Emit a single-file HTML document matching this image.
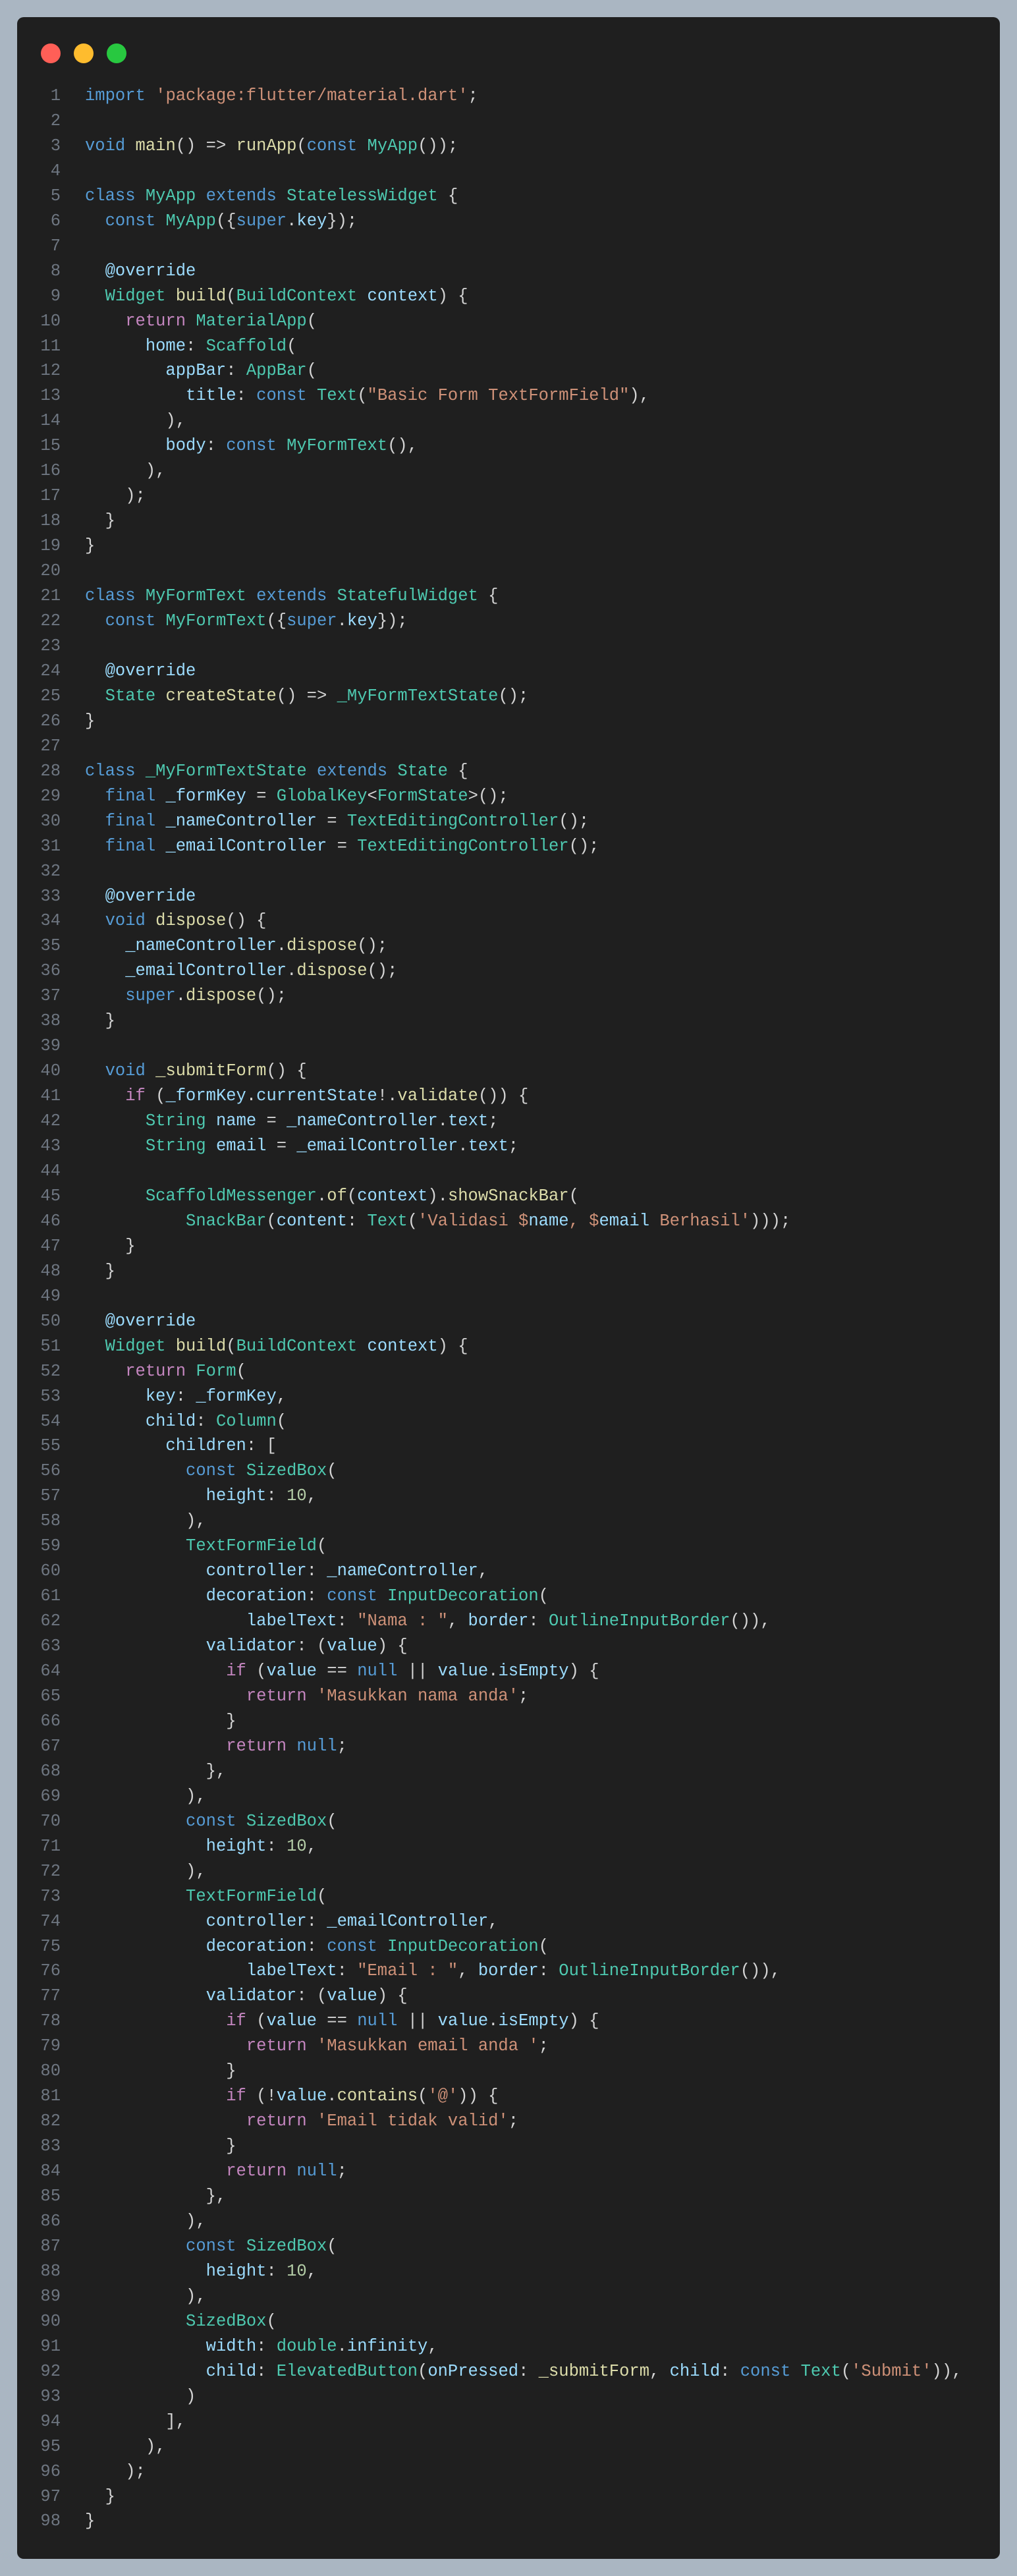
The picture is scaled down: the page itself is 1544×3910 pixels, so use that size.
<!DOCTYPE html>
<html><head><meta charset="utf-8">
<style>
html,body{margin:0;padding:0;}
body{width:1544px;height:3910px;background:#aab6c2;position:relative;overflow:hidden;}
.card{position:absolute;left:26px;top:26px;width:1492px;height:3858px;background:#1f1f1f;border-radius:10px;}
.dot{position:absolute;top:66px;width:30px;height:30px;border-radius:50%;}
pre{position:absolute;left:0;top:127px;margin:0;font-family:"Liberation Mono",monospace;font-size:25.5px;line-height:37.96px;color:#d4d4d4;white-space:pre;}
.ln{position:absolute;left:36px;top:127px;width:56px;text-align:right;font-family:"Liberation Mono",monospace;font-size:25.5px;line-height:37.96px;color:#6e7681;white-space:pre;margin:0;}
.code{left:129px;}
.k{color:#569cd6}.c{color:#c586c0}.t{color:#4ec9b0}.f{color:#dcdcaa}.s{color:#ce9178}.v{color:#9cdcfe}.n{color:#b5cea8}
</style></head><body>
<div class="dot" style="left:62px;background:#ff5f57"></div>
<div class="dot" style="left:112px;background:#febc2e"></div>
<div class="dot" style="left:162px;background:#28c840"></div>
<div class="card" style="z-index:-1"></div>
<pre class="ln">1
2
3
4
5
6
7
8
9
10
11
12
13
14
15
16
17
18
19
20
21
22
23
24
25
26
27
28
29
30
31
32
33
34
35
36
37
38
39
40
41
42
43
44
45
46
47
48
49
50
51
52
53
54
55
56
57
58
59
60
61
62
63
64
65
66
67
68
69
70
71
72
73
74
75
76
77
78
79
80
81
82
83
84
85
86
87
88
89
90
91
92
93
94
95
96
97
98</pre>
<pre class="code"><span class="k">import</span> <span class="s">'package:flutter/material.dart'</span>;

<span class="k">void</span> <span class="f">main</span>() =&gt; <span class="f">runApp</span>(<span class="k">const</span> <span class="t">MyApp</span>());

<span class="k">class</span> <span class="t">MyApp</span> <span class="k">extends</span> <span class="t">StatelessWidget</span> {
  <span class="k">const</span> <span class="t">MyApp</span>({<span class="k">super</span>.<span class="v">key</span>});

  <span class="v">@override</span>
  <span class="t">Widget</span> <span class="f">build</span>(<span class="t">BuildContext</span> <span class="v">context</span>) {
    <span class="c">return</span> <span class="t">MaterialApp</span>(
      <span class="v">home</span>: <span class="t">Scaffold</span>(
        <span class="v">appBar</span>: <span class="t">AppBar</span>(
          <span class="v">title</span>: <span class="k">const</span> <span class="t">Text</span>(<span class="s">"Basic Form TextFormField"</span>),
        ),
        <span class="v">body</span>: <span class="k">const</span> <span class="t">MyFormText</span>(),
      ),
    );
  }
}

<span class="k">class</span> <span class="t">MyFormText</span> <span class="k">extends</span> <span class="t">StatefulWidget</span> {
  <span class="k">const</span> <span class="t">MyFormText</span>({<span class="k">super</span>.<span class="v">key</span>});

  <span class="v">@override</span>
  <span class="t">State</span> <span class="f">createState</span>() =&gt; <span class="t">_MyFormTextState</span>();
}

<span class="k">class</span> <span class="t">_MyFormTextState</span> <span class="k">extends</span> <span class="t">State</span> {
  <span class="k">final</span> <span class="v">_formKey</span> = <span class="t">GlobalKey</span>&lt;<span class="t">FormState</span>&gt;();
  <span class="k">final</span> <span class="v">_nameController</span> = <span class="t">TextEditingController</span>();
  <span class="k">final</span> <span class="v">_emailController</span> = <span class="t">TextEditingController</span>();

  <span class="v">@override</span>
  <span class="k">void</span> <span class="f">dispose</span>() {
    <span class="v">_nameController</span>.<span class="f">dispose</span>();
    <span class="v">_emailController</span>.<span class="f">dispose</span>();
    <span class="k">super</span>.<span class="f">dispose</span>();
  }

  <span class="k">void</span> <span class="f">_submitForm</span>() {
    <span class="c">if</span> (<span class="v">_formKey</span>.<span class="v">currentState</span>!.<span class="f">validate</span>()) {
      <span class="t">String</span> <span class="v">name</span> = <span class="v">_nameController</span>.<span class="v">text</span>;
      <span class="t">String</span> <span class="v">email</span> = <span class="v">_emailController</span>.<span class="v">text</span>;

      <span class="t">ScaffoldMessenger</span>.<span class="f">of</span>(<span class="v">context</span>).<span class="f">showSnackBar</span>(
          <span class="t">SnackBar</span>(<span class="v">content</span>: <span class="t">Text</span>(<span class="s">'Validasi $</span><span class="v">name</span><span class="s">, $</span><span class="v">email</span><span class="s"> Berhasil'</span>)));
    }
  }

  <span class="v">@override</span>
  <span class="t">Widget</span> <span class="f">build</span>(<span class="t">BuildContext</span> <span class="v">context</span>) {
    <span class="c">return</span> <span class="t">Form</span>(
      <span class="v">key</span>: <span class="v">_formKey</span>,
      <span class="v">child</span>: <span class="t">Column</span>(
        <span class="v">children</span>: [
          <span class="k">const</span> <span class="t">SizedBox</span>(
            <span class="v">height</span>: <span class="n">10</span>,
          ),
          <span class="t">TextFormField</span>(
            <span class="v">controller</span>: <span class="v">_nameController</span>,
            <span class="v">decoration</span>: <span class="k">const</span> <span class="t">InputDecoration</span>(
                <span class="v">labelText</span>: <span class="s">"Nama : "</span>, <span class="v">border</span>: <span class="t">OutlineInputBorder</span>()),
            <span class="v">validator</span>: (<span class="v">value</span>) {
              <span class="c">if</span> (<span class="v">value</span> == <span class="k">null</span> || <span class="v">value</span>.<span class="v">isEmpty</span>) {
                <span class="c">return</span> <span class="s">'Masukkan nama anda'</span>;
              }
              <span class="c">return</span> <span class="k">null</span>;
            },
          ),
          <span class="k">const</span> <span class="t">SizedBox</span>(
            <span class="v">height</span>: <span class="n">10</span>,
          ),
          <span class="t">TextFormField</span>(
            <span class="v">controller</span>: <span class="v">_emailController</span>,
            <span class="v">decoration</span>: <span class="k">const</span> <span class="t">InputDecoration</span>(
                <span class="v">labelText</span>: <span class="s">"Email : "</span>, <span class="v">border</span>: <span class="t">OutlineInputBorder</span>()),
            <span class="v">validator</span>: (<span class="v">value</span>) {
              <span class="c">if</span> (<span class="v">value</span> == <span class="k">null</span> || <span class="v">value</span>.<span class="v">isEmpty</span>) {
                <span class="c">return</span> <span class="s">'Masukkan email anda '</span>;
              }
              <span class="c">if</span> (!<span class="v">value</span>.<span class="f">contains</span>(<span class="s">'@'</span>)) {
                <span class="c">return</span> <span class="s">'Email tidak valid'</span>;
              }
              <span class="c">return</span> <span class="k">null</span>;
            },
          ),
          <span class="k">const</span> <span class="t">SizedBox</span>(
            <span class="v">height</span>: <span class="n">10</span>,
          ),
          <span class="t">SizedBox</span>(
            <span class="v">width</span>: <span class="t">double</span>.<span class="v">infinity</span>,
            <span class="v">child</span>: <span class="t">ElevatedButton</span>(<span class="v">onPressed</span>: <span class="f">_submitForm</span>, <span class="v">child</span>: <span class="k">const</span> <span class="t">Text</span>(<span class="s">'Submit'</span>)),
          )
        ],
      ),
    );
  }
}</pre>
</body></html>
